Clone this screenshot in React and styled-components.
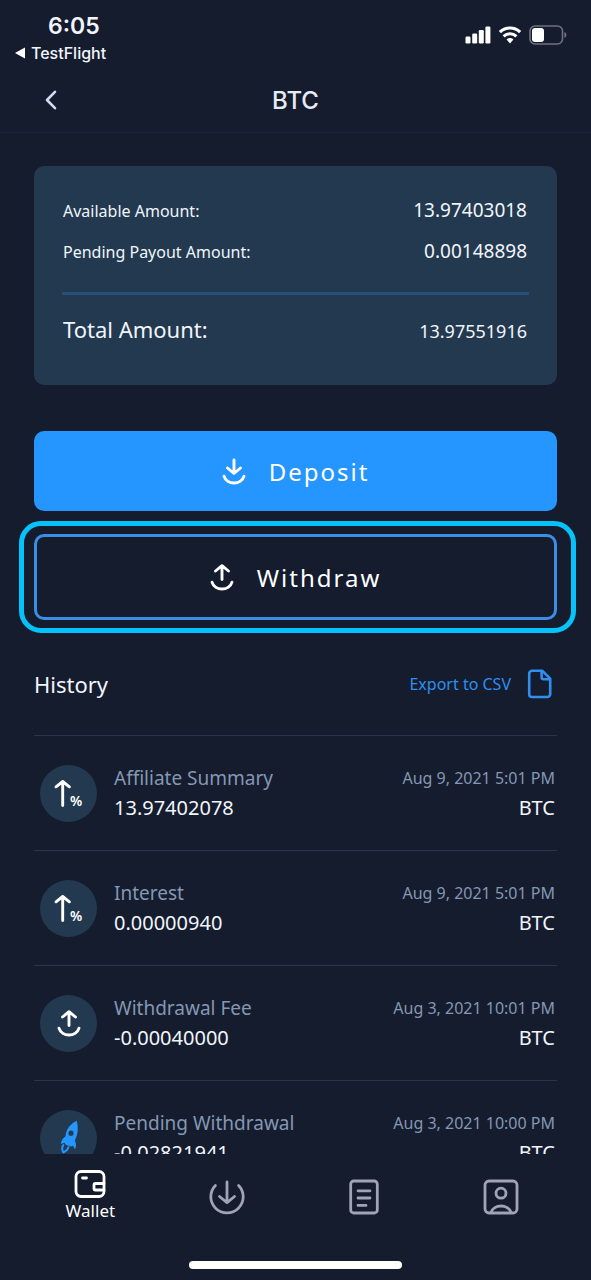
import React from "react";
import styled, { createGlobalStyle } from "styled-components";

const entries = [
  { id: 1, icon: "percent", title: "Affiliate Summary", amount: "13.97402078", date: "Aug 9, 2021 5:01 PM" },
  { id: 2, icon: "percent", title: "Interest", amount: "0.00000940", date: "Aug 9, 2021 5:01 PM" },
  { id: 3, icon: "up", title: "Withdrawal Fee", amount: "-0.00040000", date: "Aug 3, 2021 10:01 PM" },
  { id: 4, icon: "rocket", title: "Pending Withdrawal", amount: "-0.02821941", date: "Aug 3, 2021 10:00 PM" },
];

function DownIcon() {
  return (
    <Stroke width="24" height="28" viewBox="0 0 24 28">
      <path d="M12 3V15.5M5.5 11L12 16.3L18.5 11M2 19.2C4.6 28.3 19.4 28.3 22 19.2" />
    </Stroke>
  );
}

function UpIcon() {
  return (
    <Stroke width="24" height="28" viewBox="0 0 24 28">
      <path d="M12 16.5V3.5M5.5 8L12 2.7L18.5 8M2 19.2C4.6 28.3 19.4 28.3 22 19.2" />
    </Stroke>
  );
}

function PercentIcon() {
  return (
    <Stroke width="57" height="57" viewBox="0 0 57 57">
      <path d="M22.7 40.5V17M16 21.8L22.7 16.5L29.4 21.8" />
      <text x="30" y="41">%</text>
    </Stroke>
  );
}

function RocketIcon() {
  return (
    <svg width="57" height="57" viewBox="0 0 57 57" aria-hidden="true">
      <path
        fill="#2596ff"
        fillRule="evenodd"
        d="M36.6 10.8C32 13 27.6 17.5 26 23L25.4 26.6C23 28 21.2 30.5 20.8 34L24.5 32.8L25.6 34.8L31 36.6L33 35.8L35 39.2C36.6 36.4 36.2 33.6 34.8 30.6C38 25 38.6 17 36.6 10.8ZM31 20.6A2.6 2.6 0 1 1 31 25.8A2.6 2.6 0 1 1 31 20.6Z"
      />
      <path
        fill="none"
        stroke="#2596ff"
        strokeWidth="2"
        strokeLinejoin="round"
        d="M23.8 34.5C21.4 37 22 40 23.4 42.4C26 41.2 28 39.4 28.6 36.4"
      />
    </svg>
  );
}

function EntryIcon({ type }) {
  if (type === "percent") return <PercentIcon />;
  if (type === "rocket") return <RocketIcon />;
  return <UpIcon />;
}

function StatusBar() {
  return (
    <Status>
      <div>
        <Clock>6:05</Clock>
        <BackToApp href="#testflight">
          <svg width="10" height="12" viewBox="0 0 10 12" aria-hidden="true">
            <path fill="#fff" d="M10 0.6V11.4L0 6Z" />
          </svg>
          TestFlight
        </BackToApp>
      </div>
      <Indicators>
        <svg width="26" height="18" viewBox="0 0 26 18" fill="#fff" aria-hidden="true">
          <rect x="0.5" y="10.5" width="5" height="7" rx="1.2" />
          <rect x="7.2" y="7.5" width="5" height="10" rx="1.2" />
          <rect x="13.8" y="4" width="5" height="13.5" rx="1.2" />
          <rect x="20.4" y="0.5" width="5" height="17" rx="1.2" />
        </svg>
        <svg width="22" height="18" viewBox="0 0 22 18" aria-hidden="true">
          <path fill="none" stroke="#fff" strokeWidth="3.2" d="M0.9 6.2C6.4 0.6 15.6 0.6 21.1 6.2" />
          <path fill="none" stroke="#fff" strokeWidth="3" d="M4.6 10.4C8.2 6.8 13.8 6.8 17.4 10.4" />
          <path fill="#fff" d="M7.6 13.6C9.4 11.6 12.6 11.6 14.4 13.6L11 17.4Z" />
        </svg>
        <svg width="38" height="20" viewBox="0 0 38 20" aria-hidden="true">
          <rect x="1" y="1" width="32.5" height="18" rx="5" fill="none" stroke="#6d7280" strokeWidth="1.6" />
          <rect x="3" y="3" width="12" height="14" rx="3" fill="#fff" />
          <path fill="#6d7280" d="M35.4 7V13C38 12 38 8 35.4 7Z" />
        </svg>
      </Indicators>
    </Status>
  );
}

function App() {
  return (
    <Screen>
      <GlobalStyle />
      <StatusBar />
      <Header>
        <IconButton aria-label="Back">
          <svg width="14" height="22" viewBox="0 0 14 22" aria-hidden="true">
            <path
              fill="none"
              stroke="#cfdcf2"
              strokeWidth="2.6"
              strokeLinecap="round"
              strokeLinejoin="round"
              d="M11 2.8L3 11L11 19.2"
            />
          </svg>
        </IconButton>
        <h1>BTC</h1>
      </Header>

      <Content>
        <Card>
          <Line>
            <dt>Available Amount:</dt>
            <dd>13.97403018</dd>
          </Line>
          <Line>
            <dt>Pending Payout Amount:</dt>
            <dd>0.00148898</dd>
          </Line>
          <Total>
            <dt>Total Amount:</dt>
            <dd>13.97551916</dd>
          </Total>
        </Card>

        <Action $filled>
          <DownIcon />
          Deposit
        </Action>
        <Highlight>
          <Action>
            <UpIcon />
            Withdraw
          </Action>
        </Highlight>

        <HistoryBar>
          <h2>History</h2>
          <Export>
            Export to CSV
            <svg width="26" height="30" viewBox="0 0 26 30" aria-hidden="true">
              <path
                fill="none"
                stroke="#2f8ff0"
                strokeWidth="2.6"
                strokeLinejoin="round"
                d="M15.4 1.8H5A2.8 2.8 0 0 0 2.2 4.6V25.2A2.8 2.8 0 0 0 5 28H20.4A2.8 2.8 0 0 0 23.2 25.2V9.6ZM14.6 2V8.2A2 2 0 0 0 16.6 10.2H23"
              />
            </svg>
          </Export>
        </HistoryBar>

        <List>
          {entries.map((entry) => (
            <Entry key={entry.id}>
              <Badge>
                <EntryIcon type={entry.icon} />
              </Badge>
              <Info>
                <Muted>{entry.title}</Muted>
                <Value>{entry.amount}</Value>
              </Info>
              <Info $end>
                <Muted $small>{entry.date}</Muted>
                <Value>BTC</Value>
              </Info>
            </Entry>
          ))}
        </List>
      </Content>

      <TabBar>
        <Tab href="#wallet" $active aria-current="page">
          <svg width="32" height="28" viewBox="0 0 32 28" aria-hidden="true">
            <rect x="2" y="1.5" width="28" height="25" rx="5" />
            <path d="M8.5 8H12.5M30 13.5H21.5A1.5 1.5 0 0 0 20 15V18.5A1.5 1.5 0 0 0 21.5 20H30" />
          </svg>
          Wallet
        </Tab>
        <Tab href="#deposit" aria-label="Deposit">
          <svg width="36" height="36" viewBox="0 0 36 36" aria-hidden="true">
            <path d="M6.4 6.4A16.2 16.2 0 1 0 29.6 6.4M18 3V23M10.5 17.5L18 23.6L25.5 17.5" />
          </svg>
        </Tab>
        <Tab href="#orders" aria-label="Orders">
          <svg width="36" height="36" viewBox="0 0 36 36" aria-hidden="true">
            <rect x="4.7" y="2" width="26.6" height="32" rx="3" />
            <path d="M12 11.8H24M12 19H24M12 26.4H20" />
          </svg>
        </Tab>
        <Tab href="#profile" aria-label="Profile">
          <svg width="36" height="36" viewBox="0 0 36 36" aria-hidden="true">
            <rect x="2" y="2" width="32" height="32" rx="4" />
            <circle cx="18" cy="14.2" r="5" />
            <path d="M8 33.5C10.5 24.8 25.5 24.8 28 33.5" />
          </svg>
        </Tab>
      </TabBar>
      <HomeIndicator />
    </Screen>
  );
}

const GlobalStyle = createGlobalStyle`
  * {
    box-sizing: border-box;
  }

  body {
    margin: 0;
    background: #141c2e;
    color: #f1f5fb;
    font-family: "Noto Sans", sans-serif;
  }

  h1, h2, dl, dt, dd, ul {
    margin: 0;
    padding: 0;
    font-weight: 400;
  }

  button {
    border: 0;
    padding: 0;
    background: none;
    color: inherit;
    font: inherit;
    cursor: pointer;
  }

  a {
    color: inherit;
    text-decoration: none;
  }
`;

const Screen = styled.div`
  display: flex;
  flex-direction: column;
  height: 100vh;
  overflow: hidden;
`;

const Stroke = styled.svg.attrs({ "aria-hidden": true })`
  fill: none;
  stroke: #fff;
  stroke-width: 2.9;
  stroke-linecap: round;
  stroke-linejoin: round;

  text {
    fill: #fff;
    stroke: none;
    font-size: 14px;
    font-weight: 600;
  }
`;

const Status = styled.div`
  display: flex;
  justify-content: space-between;
  padding: 12px 24px 0 15px;
  height: 68px;
  font-family: Inter, sans-serif;
`;

const Clock = styled.div`
  padding-left: 33px;
  font-size: 23px;
  font-weight: 600;
  line-height: 28px;
`;

const BackToApp = styled.a`
  display: flex;
  align-items: center;
  gap: 6px;
  font-size: 16px;
  font-weight: 500;
  line-height: 26px;
`;

const Indicators = styled.div`
  display: flex;
  align-items: center;
  gap: 8px;
  height: 46px;
`;

const Header = styled.header`
  display: grid;
  grid-template-columns: 1fr auto 1fr;
  align-items: center;
  height: 65px;
  padding: 0 34px;
  border-bottom: 1px solid #1b2436;

  h1 {
    color: #e6ebf4;
    font-family: Inter, sans-serif;
    font-size: 24px;
    font-weight: 500;
  }
`;

const IconButton = styled.button`
  display: flex;
  justify-self: start;
  padding: 10px;
`;

const Content = styled.main`
  flex: 1;
  min-height: 0;
  overflow: hidden;
  padding: 33px 34px 0;
`;

const Card = styled.dl`
  padding: 24px 28px 20px;
  margin-bottom: 46px;
  border-radius: 10px;
  background: #223950;
`;

const Line = styled.div`
  display: flex;
  justify-content: space-between;
  align-items: baseline;
  padding: 0 2px 0 1px;
  line-height: 40px;

  dt {
    font-size: 16px;
  }

  dd {
    font-size: 19px;
  }
`;

const Total = styled(Line)`
  margin-top: 20px;
  padding: 14px 2px 14px 1px;
  border-top: 3px solid #25507a;

  dt {
    font-size: 22px;
  }

  dd {
    font-size: 18px;
  }
`;

const Action = styled.button`
  display: flex;
  justify-content: center;
  align-items: center;
  gap: 23px;
  width: 100%;
  height: ${(props) => (props.$filled ? "80px" : "86px")};
  border: ${(props) => (props.$filled ? "0" : "3px solid #3a8ee6")};
  border-radius: 10px;
  background: ${(props) => (props.$filled ? "#2596ff" : "#141c2e")};
  color: #fff;
  font-size: 24px;
  letter-spacing: 2px;
`;

const Highlight = styled.div`
  margin: 10px -19px 0 -15px;
  padding: 8px 14px 8px 10px;
  border: 5px solid #05c3fa;
  border-radius: 22px;
`;

const HistoryBar = styled.div`
  display: flex;
  justify-content: space-between;
  align-items: center;
  height: 102px;

  h2 {
    font-size: 22px;
  }
`;

const Export = styled.button`
  display: flex;
  align-items: center;
  gap: 16px;
  padding-right: 4px;
  color: #2f8ff0;
  font-size: 16px;
`;

const List = styled.ul`
  list-style: none;
`;

const Entry = styled.li`
  display: flex;
  align-items: center;
  height: 115px;
  padding: 0 2px 0 6px;
  border-top: 1px solid #2b3547;
`;

const Badge = styled.span`
  display: flex;
  justify-content: center;
  align-items: center;
  width: 57px;
  height: 57px;
  margin-right: 17px;
  border-radius: 50%;
  background: #223950;
`;

const Info = styled.div`
  display: flex;
  flex-direction: column;
  margin-left: ${(props) => (props.$end ? "auto" : "0")};
  text-align: ${(props) => (props.$end ? "right" : "left")};
`;

const Muted = styled.span`
  color: #8597b3;
  font-size: ${(props) => (props.$small ? "16px" : "19px")};
  line-height: 29px;
`;

const Value = styled.span`
  font-size: 20px;
  line-height: 29px;
`;

const TabBar = styled.nav`
  display: grid;
  grid-template-columns: repeat(4, 1fr);
  height: 86px;
  padding: 0 22px;
`;

const Tab = styled.a`
  display: flex;
  flex-direction: column;
  align-items: center;
  justify-content: center;
  font-size: 17px;
  line-height: 26px;
  color: #fff;

  svg {
    fill: none;
    stroke: ${(props) => (props.$active ? "#fff" : "#a0a4b4")};
    stroke-width: 2.8;
    stroke-linecap: round;
    stroke-linejoin: round;
  }
`;

const HomeIndicator = styled.div`
  width: 36%;
  height: 8px;
  margin: 21px auto 11px;
  border-radius: 4px;
  background: #fff;
`;

export default App;
